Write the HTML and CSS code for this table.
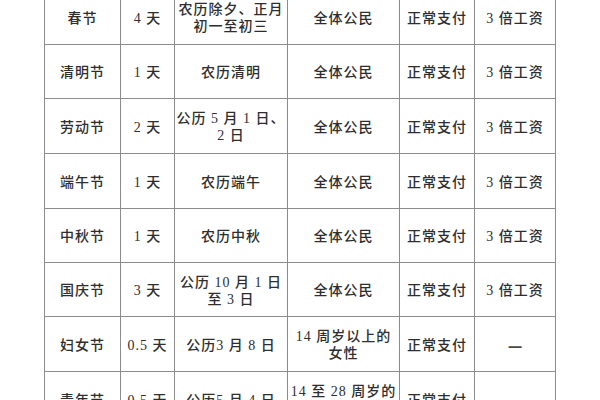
FILE: index.html
```html
<!DOCTYPE html>
<html lang="zh-CN">
<head>
<meta charset="utf-8">
<link rel="stylesheet" href="styles.css">
</head>
<body>
<div class="table">
  <div class="cell r1">春节</div><div class="cell r1">4 天</div><div class="cell r1">农历除夕、正月<br>初一至初三</div><div class="cell r1">全体公民</div><div class="cell r1">正常支付</div><div class="cell r1">3 倍工资</div>
  <div class="cell r2">清明节</div><div class="cell r2">1 天</div><div class="cell r2">农历清明</div><div class="cell r2">全体公民</div><div class="cell r2">正常支付</div><div class="cell r2">3 倍工资</div>
  <div class="cell r3">劳动节</div><div class="cell r3">2 天</div><div class="cell r3">公历 5 月 1 日、<br>2 日</div><div class="cell r3">全体公民</div><div class="cell r3">正常支付</div><div class="cell r3">3 倍工资</div>
  <div class="cell r4">端午节</div><div class="cell r4">1 天</div><div class="cell r4">农历端午</div><div class="cell r4">全体公民</div><div class="cell r4">正常支付</div><div class="cell r4">3 倍工资</div>
  <div class="cell r5">中秋节</div><div class="cell r5">1 天</div><div class="cell r5">农历中秋</div><div class="cell r5">全体公民</div><div class="cell r5">正常支付</div><div class="cell r5">3 倍工资</div>
  <div class="cell r6">国庆节</div><div class="cell r6">3 天</div><div class="cell r6">公历 10 月 1 日<br>至 3 日</div><div class="cell r6">全体公民</div><div class="cell r6">正常支付</div><div class="cell r6">3 倍工资</div>
  <div class="cell r7">妇女节</div><div class="cell r7">0.5 天</div><div class="cell r7">公历3 月 8 日</div><div class="cell r7">14 周岁以上的<br>女性</div><div class="cell r7">正常支付</div><div class="cell r7"><span class="dash">—</span></div>
  <div class="cell r8">青年节</div><div class="cell r8">0.5 天</div><div class="cell r8">公历5 月 4 日</div><div class="cell r8">14 至 28 周岁的<br>青年</div><div class="cell r8">正常支付</div><div class="cell r8"><span class="dash">—</span></div>
</div>
</body>
</html>
```
FILE: styles.css
```css
html, body {
  margin: 0;
  padding: 0;
  background: #ffffff;
  overflow: hidden;
}
.table {
  display: grid;
  grid-template-columns: 75px 53px 112px 111px 74px 80px;
  grid-template-rows: 54px 53px 54px 54px 53px 53px 54px 54px;
  gap: 1px;
  padding: 1px;
  background: #8c8c8c;
  width: max-content;
  margin: -11px 0 0 44px;
}
.cell {
  background: #ffffff;
  display: flex;
  align-items: center;
  justify-content: center;
  text-align: center;
  font-family: "Liberation Serif", "Noto Sans CJK SC", serif;
  font-size: 14px;
  font-weight: 500;
  line-height: 17px;
  letter-spacing: 1px;
  color: #2e2e2e;
  padding-top: 2px;
  box-sizing: border-box;
}
.dash {
  font-family: "Noto Sans CJK SC", sans-serif;
  font-size: 16px;
  font-weight: 900;
  letter-spacing: 0;
  color: #4a4a4a;
}
```
